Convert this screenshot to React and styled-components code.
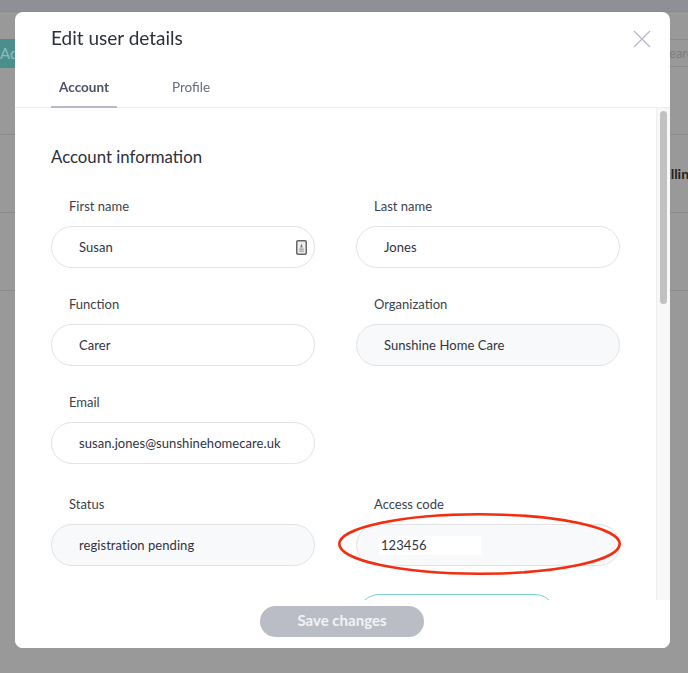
import React from "react";
import styled, { createGlobalStyle } from "styled-components";

const GlobalStyle = createGlobalStyle`
  html, body {
    margin: 0;
    padding: 0;
    height: 100%;
    overflow: hidden;
    background: #999999;
    font-family: Lato, "Noto Sans", sans-serif;
  }
`;

const Page = styled.div`
  height: 673px;
  overflow: hidden;
  display: flex;
  flex-direction: column;
  background: #999999;
`;

const TopBand = styled.div`
  height: 11px;
  background: #8f9095;
  border-bottom: 1px solid #8a8b8f;
`;

const Toolbar = styled.div`
  height: 95px;
  padding-top: 27px;
  display: flex;
  justify-content: space-between;
  align-items: flex-start;
  overflow: hidden;
  border-bottom: 1px solid #8b8b8b;
`;

const AddButton = styled.div`
  width: 90px;
  height: 29px;
  line-height: 29px;
  background: #4b8f8d;
  color: #8fbcbb;
  font-size: 15px;
  white-space: nowrap;
`;

const SearchBox = styled.div`
  width: 190px;
  height: 26px;
  margin-right: -164px;
  padding-left: 8px;
  line-height: 26px;
  font-size: 13px;
  color: #7d7d7d;
  border-top: 1px solid #8b8b8b;
  border-bottom: 1px solid #8b8b8b;
`;

const BackRow = styled.div`
  height: 77px;
  display: grid;
  grid-template-columns: 658px 1fr;
  align-items: center;
  border-bottom: 1px solid #8b8b8b;
  overflow: hidden;
`;

const BackCell = styled.div`
  grid-column: 2;
  font-size: 14px;
  font-weight: 700;
  color: #222222;
  white-space: nowrap;
`;

const Modal = styled.div`
  position: fixed;
  left: 15px;
  top: 12px;
  width: 655px;
  height: 636px;
  display: flex;
  flex-direction: column;
  background: #ffffff;
  border-radius: 8px;
  overflow: hidden;
`;

const ModalHeader = styled.header`
  position: relative;
  height: 95px;
  flex: none;
  padding-left: 36px;
  display: flex;
  flex-direction: column;
  justify-content: space-between;
  border-bottom: 1px solid #eeeef0;
`;

const Title = styled.h1`
  margin: 14px 0 0;
  font-size: 19px;
  line-height: 24px;
  font-weight: 400;
  color: #2c2f3d;
`;

const CloseButton = styled.button`
  position: absolute;
  top: 18px;
  right: 19px;
  width: 18px;
  height: 18px;
  padding: 0;
  border: 0;
  background: none;
  display: block;
`;

const Tabs = styled.nav`
  display: flex;
  gap: 46px;
`;

const Tab = styled.div`
  width: ${(p) => (p.$active ? "66px" : "auto")};
  padding: 0 ${(p) => (p.$active ? "0" : "9px")} 10px;
  margin-bottom: -1px;
  box-sizing: border-box;
  text-align: center;
  font-size: 13.5px;
  line-height: 17px;
  font-weight: ${(p) => (p.$active ? 700 : 400)};
  color: ${(p) => (p.$active ? "#4c5268" : "#666b7d")};
  border-bottom: 2px solid ${(p) => (p.$active ? "#b6b9c9" : "transparent")};
`;

const ScrollArea = styled.div`
  flex: 1;
  min-height: 0;
  display: flex;
  overflow: hidden;
`;

const Content = styled.div`
  flex: 1;
  padding: 37px 0 0 36px;
  overflow: hidden;
`;

const ScrollTrack = styled.div`
  width: 14px;
  flex: none;
  padding: 3px 3px 0;
  box-sizing: border-box;
  background: #f8f8f8;
  border-left: 1px solid #eeeeee;
`;

const ScrollThumb = styled.div`
  height: 193px;
  border-radius: 4px;
  background: #c1c1c1;
`;

const SectionTitle = styled.h2`
  margin: 0 0 28px;
  font-size: 16.8px;
  line-height: 24px;
  font-weight: 400;
  color: #2c2f3d;
`;

const FormGrid = styled.div`
  display: grid;
  grid-template-columns: 264px 264px;
  column-gap: 41px;
  row-gap: 27px;
`;

const Field = styled.div`
  grid-column: ${(p) => p.$column || "auto"};
  margin-top: ${(p) => p.$shift || 0}px;
`;

const Label = styled.div`
  margin: 0 0 11px 18px;
  height: 18px;
  font-size: 13px;
  line-height: 18px;
  color: #3c3f4c;
`;

const InputBox = styled.div`
  position: relative;
  height: 42px;
  box-sizing: border-box;
  padding-left: 27px;
  display: flex;
  align-items: center;
  justify-content: space-between;
  border: 1px solid #e3e3e6;
  border-radius: 21px;
  background: ${(p) => (p.$disabled ? "#f8f9fb" : "#ffffff")};
  font-size: 13px;
  letter-spacing: 0.06px;
  color: #30333f;
`;

const Redacted = styled.span`
  width: 102px;
  height: 19px;
  margin-left: -5px;
  padding-left: 2px;
  box-sizing: border-box;
  line-height: 19px;
  background: #ffffff;
`;

const Ellipse = styled.svg`
  position: absolute;
  left: -20px;
  top: -12px;
  width: 286px;
  height: 64px;
  overflow: visible;
  pointer-events: none;
`;

const AutofillIcon = styled.svg`
  width: 11px;
  height: 15px;
  margin-right: 7px;
  flex: none;
`;

const GenerateButton = styled.div`
  grid-column: 2;
  height: 42px;
  width: 198px;
  margin: 1px 0 0 2px;
  border: 1px solid #7ccfd0;
  border-radius: 21px;
  box-sizing: border-box;
`;

const ModalFooter = styled.footer`
  height: 48px;
  flex: none;
  padding: 6px 1px 0 0;
  box-sizing: border-box;
  display: flex;
  justify-content: center;
  align-items: flex-start;
  background: #ffffff;
`;

const SaveButton = styled.button`
  width: 164px;
  height: 31px;
  padding: 0 0 4px;
  border: 0;
  border-radius: 16px;
  background: #babdc5;
  color: #f2f3f5;
  font-family: inherit;
  font-size: 15px;
  font-weight: 700;
`;

export default function App() {
  return (
    <>
      <GlobalStyle />
      <Page>
        <TopBand />
        <Toolbar>
          <AddButton>Add user</AddButton>
          <SearchBox>Search</SearchBox>
        </Toolbar>
        <BackRow>
          <BackCell>Billing</BackCell>
        </BackRow>
        <BackRow />
      </Page>
      <Modal>
        <ModalHeader>
          <Title>Edit user details</Title>
          <CloseButton aria-label="Close">
            <svg width="18" height="18" viewBox="0 0 18 18" fill="none" stroke="#b4b6c4" strokeWidth="1.1">
              <path d="M1 1 L17 17 M17 1 L1 17" />
            </svg>
          </CloseButton>
          <Tabs>
            <Tab $active>Account</Tab>
            <Tab>Profile</Tab>
          </Tabs>
        </ModalHeader>
        <ScrollArea>
          <Content>
            <SectionTitle>Account information</SectionTitle>
            <FormGrid>
              <Field>
                <Label>First name</Label>
                <InputBox>
                  Susan
                  <AutofillIcon viewBox="0 0 11 15">
                    <rect x="0.75" y="0.75" width="9.5" height="13.5" rx="1.2" fill="#eeeeee" stroke="#666666" strokeWidth="1.5" />
                    <path d="M5.5 3.5 L6.8 7.5 H4.2 Z" fill="#777777" />
                    <path d="M3.2 8.6 H7.8 V9.8 H3.2 Z M3.2 10.6 H7.8 V11.8 H3.2 Z" fill="#999999" />
                  </AutofillIcon>
                </InputBox>
              </Field>
              <Field>
                <Label>Last name</Label>
                <InputBox>Jones</InputBox>
              </Field>
              <Field>
                <Label>Function</Label>
                <InputBox>Carer</InputBox>
              </Field>
              <Field>
                <Label>Organization</Label>
                <InputBox $disabled>Sunshine Home Care</InputBox>
              </Field>
              <Field $column="1">
                <Label>Email</Label>
                <InputBox>susan.jones@sunshinehomecare.uk</InputBox>
              </Field>
              <Field $column="1" $shift={4}>
                <Label>Status</Label>
                <InputBox $disabled>registration pending</InputBox>
              </Field>
              <Field $shift={4}>
                <Label>Access code</Label>
                <InputBox $disabled>
                  <Redacted>123456</Redacted>
                  <Ellipse viewBox="0 0 286 64">
                    <ellipse cx="142.5" cy="31" rx="140.2" ry="29.7" fill="none" stroke="#f42c10" strokeWidth="2.6" />
                  </Ellipse>
                </InputBox>
              </Field>
              <GenerateButton />
            </FormGrid>
          </Content>
          <ScrollTrack>
            <ScrollThumb />
          </ScrollTrack>
        </ScrollArea>
        <ModalFooter>
          <SaveButton>Save changes</SaveButton>
        </ModalFooter>
      </Modal>
    </>
  );
}
